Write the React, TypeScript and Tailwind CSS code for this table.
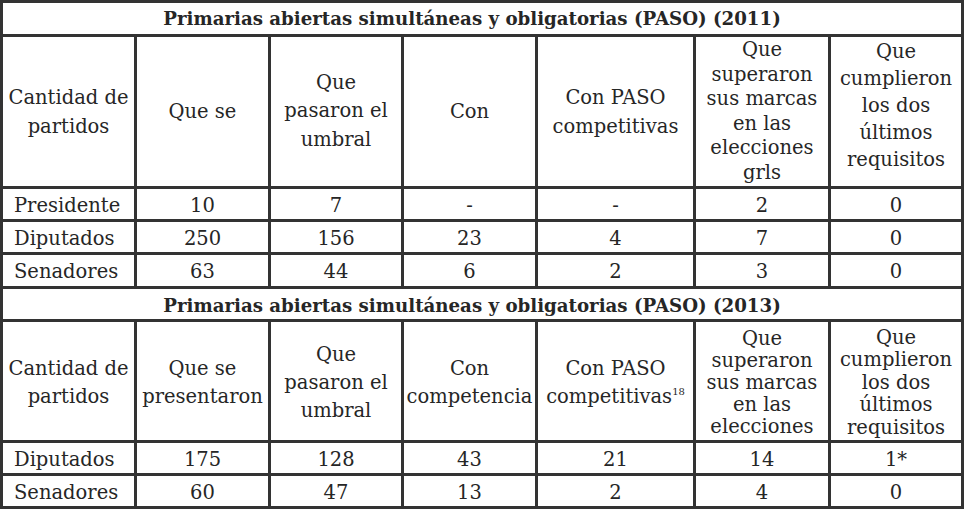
import React from "react";

type CellProps = {
  children?: React.ReactNode;
  className?: string;
};

function Cell({ children, className = "" }: CellProps) {
  return (
    <div
      className={`flex items-center justify-center bg-white text-center ${className}`}
    >
      {children}
    </div>
  );
}

function Label({ children }: { children: React.ReactNode }) {
  return <Cell className="justify-start pl-[11px] pt-[3px]">{children}</Cell>;
}

function Title({ year, className = "" }: { year: string; className?: string }) {
  return (
    <Cell className={`col-span-7 pr-[20px] text-[18.2px] font-bold ${className}`}>
      Primarias abiertas simultáneas y obligatorias (PASO) ({year})
    </Cell>
  );
}

const rows2011 = [
  ["Presidente", "10", "7", "-", "-", "2", "0"],
  ["Diputados", "250", "156", "23", "4", "7", "0"],
  ["Senadores", "63", "44", "6", "2", "3", "0"],
];

const rows2013 = [
  ["Diputados", "175", "128", "43", "21", "14", "1*"],
  ["Senadores", "60", "47", "13", "2", "4", "0"],
];

function DataRow({ row }: { row: string[] }) {
  return (
    <>
      <Label>{row[0]}</Label>
      {row.slice(1).map((v, i) => (
        <Cell key={i} className="pt-[3px]">
          {v}
        </Cell>
      ))}
    </>
  );
}

export default function App() {
  return (
    <div className="h-[509px] w-[964px] bg-white">
      <div
        className="grid h-[509px] w-[964px] gap-[3px] bg-[#333333] p-[3px] text-[19.5px] text-[#262626]"
        style={{
          fontFamily: '"DejaVu Serif", serif',
          gridTemplateColumns: "131px 131px 130px 131px 155px 132px 130px",
          gridTemplateRows: "31px 149px 30px 30px 31px 30px 118px 30px 30px",
        }}
      >
        {/* 2011 */}
        <Title year="2011" />
        <Cell className="leading-[29px]">
          Cantidad de
          <br />
          partidos
        </Cell>
        <Cell>Que se</Cell>
        <Cell className="leading-[28.5px]">
          Que
          <br />
          pasaron el
          <br />
          umbral
        </Cell>
        <Cell>Con</Cell>
        <Cell className="leading-[29px]">
          Con PASO
          <br />
          competitivas
        </Cell>
        <Cell className="leading-[24.5px]">
          Que
          <br />
          superaron
          <br />
          sus marcas
          <br />
          en las
          <br />
          elecciones
          <br />
          grls
        </Cell>
        <Cell className="pb-[12px] leading-[27px]">
          Que
          <br />
          cumplieron
          <br />
          los dos
          <br />
          últimos
          <br />
          requisitos
        </Cell>
        {rows2011.map((r) => (
          <DataRow key={r[0]} row={r} />
        ))}

        {/* 2013 */}
        <Title year="2013" className="pt-[3px]" />
        <Cell className="pt-[4px] leading-[28px]">
          Cantidad de
          <br />
          partidos
        </Cell>
        <Cell className="pt-[4px] leading-[28px]">
          Que se
          <br />
          presentaron
        </Cell>
        <Cell className="pt-[4px] leading-[28px]">
          Que
          <br />
          pasaron el
          <br />
          umbral
        </Cell>
        <Cell className="pt-[4px] leading-[28px]">
          Con
          <br />
          competencia
        </Cell>
        <Cell className="pt-[4px] leading-[28px]">
          <span>
            Con PASO
            <br />
            competitivas
            <sup className="-top-[8px] text-[10px]">18</sup>
          </span>
        </Cell>
        <Cell className="pt-[4px] leading-[22px]">
          Que
          <br />
          superaron
          <br />
          sus marcas
          <br />
          en las
          <br />
          elecciones
        </Cell>
        <Cell className="pt-[4px] leading-[22.5px]">
          Que
          <br />
          cumplieron
          <br />
          los dos
          <br />
          últimos
          <br />
          requisitos
        </Cell>
        {rows2013.map((r) => (
          <DataRow key={r[0]} row={r} />
        ))}
      </div>
    </div>
  );
}
